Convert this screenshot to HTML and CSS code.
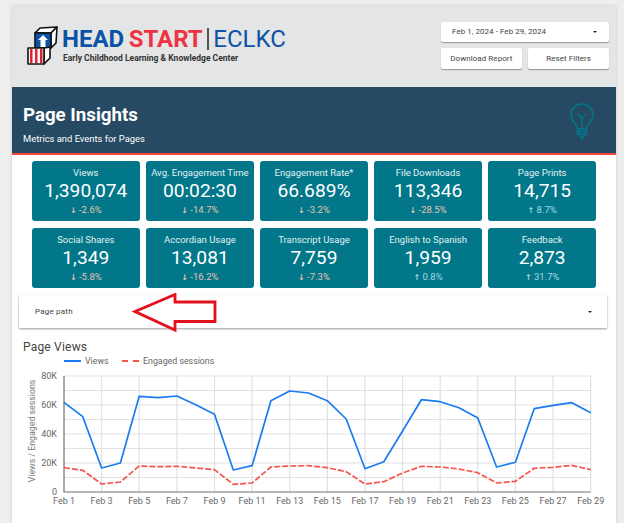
FILE: index.html
```html
<!DOCTYPE html>
<html lang="en">
<head>
  <meta charset="UTF-8">
  <title>Page Insights</title>
  <link rel="stylesheet" href="styles.css">
</head>
<body>
<div class="report">
  <!--header-->
  <div class="top">
    <div class="brand">
      <svg class="blocks" width="32" height="40" viewBox="0 0 32 40">
        <g stroke="#111" stroke-width="1.6" stroke-linejoin="round">
          <path d="M9 7 L14 2 L31 1 L25 7Z" fill="#fff"/>
          <path d="M25 7 L31 1 L30 17 L25 22Z" fill="#fff"/>
          <rect x="9" y="7" width="16" height="15" fill="#0a55a5"/>
          <path d="M18 22 L24 21 L24 32 L18 38Z" fill="#fff"/>
          <rect x="2" y="22" width="16" height="16" fill="#fff"/>
        </g>
        <path d="M17 9 L22 14 H19.5 V21 H14.5 V14 H12Z" fill="#fff"/>
        <path d="M4 23 H6.500 V37 H4Z M9 23 H11.500 V37 H9Z M14 23 H16.500 V37 H14Z" fill="#e4202e"/>
      </svg>
      <div class="brand-text">
        <div class="brand-name"><span class="blue">HEAD</span> <span class="red">START</span><i class="divider"></i><span class="eclkc">ECLKC</span></div>
        <div class="brand-sub">Early Childhood Learning &amp; Knowledge Center</div>
      </div>
    </div>
    <div class="controls">
      <div class="btn date">Feb 1, 2024 - Feb 29, 2024<i class="caret"></i></div>
      <div class="btn-row">
        <div class="btn">Download Report</div>
        <div class="btn">Reset Filters</div>
      </div>
    </div>
  </div>

  <!--banner-->
  <div class="banner">
    <div>
      <h1>Page Insights</h1>
      <p>Metrics and Events for Pages</p>
    </div>
    <svg class="bulb" width="24" height="37" viewBox="0 0 24 37" fill="none" stroke="#00788a" stroke-width="1.5">
      <path d="M7.500 26 C7 21 1 18 1 12 A11 11 0 0 1 23 12 C23 18 17 21 16.500 26Z"/>
      <path d="M12 26 V15 M8 11 L12 15 L16 11"/>
      <path d="M7.500 26 V31 H16.500 V26 M7.500 28.500 H16.500 M9 31 L12 36 L15 31"/>
    </svg>
  </div>

  <!--scorecards-->
  <div class="cards">
    <div class="card"><div class="card-title">Views</div><div class="card-value">1,390,074</div><div class="delta down"><b>↓</b> -2.6%</div></div>
    <div class="card"><div class="card-title">Avg. Engagement Time</div><div class="card-value">00:02:30</div><div class="delta down"><b>↓</b> -14.7%</div></div>
    <div class="card"><div class="card-title">Engagement Rate*</div><div class="card-value">66.689%</div><div class="delta down"><b>↓</b> -3.2%</div></div>
    <div class="card"><div class="card-title">File Downloads</div><div class="card-value">113,346</div><div class="delta down"><b>↓</b> -28.5%</div></div>
    <div class="card"><div class="card-title">Page Prints</div><div class="card-value">14,715</div><div class="delta up"><b>↑</b> 8.7%</div></div>
    <div class="card"><div class="card-title">Social Shares</div><div class="card-value">1,349</div><div class="delta down"><b>↓</b> -5.8%</div></div>
    <div class="card"><div class="card-title">Accordian Usage</div><div class="card-value">13,081</div><div class="delta down"><b>↓</b> -16.2%</div></div>
    <div class="card"><div class="card-title">Transcript Usage</div><div class="card-value">7,759</div><div class="delta down"><b>↓</b> -7.3%</div></div>
    <div class="card"><div class="card-title">English to Spanish</div><div class="card-value">1,959</div><div class="delta up"><b>↑</b> 0.8%</div></div>
    <div class="card"><div class="card-title">Feedback</div><div class="card-value">2,873</div><div class="delta up"><b>↑</b> 31.7%</div></div>
  </div>

  <!--filter, the red arrow lies over it-->
  <div class="filter">
    <span>Page path</span><i class="caret"></i>
    <svg class="callout" width="86" height="40" viewBox="0 0 86 40">
      <path d="M3 18.500 L43 1.500 V9 H83 V28.500 H43 V37 Z" fill="#fff" stroke="#e3101e" stroke-width="2.800"/>
    </svg>
  </div>

  <!--chart-->
  <h2>Page Views</h2>
  <div class="legend">
    <span class="key"><i class="swatch views"></i>Views</span>
    <span class="key"><i class="swatch sessions"></i>Engaged sessions</span>
  </div>
  <svg class="chart" width="604" height="142" viewBox="12 368 604 142">
    <g stroke="#e2e2e2" stroke-width="1.2">
      <path d="M64 376 H590.700 M64 390.500 H590.700 M64 405 H590.700 M64 419.500 H590.700 M64 434 H590.700 M64 448.500 H590.700 M64 463 H590.700 M64 477.500 H590.700"/>
      <path d="M101.600 376 V492 M139.200 376 V492 M176.900 376 V492 M214.500 376 V492 M252.100 376 V492 M289.700 376 V492 M327.300 376 V492 M365 376 V492 M402.600 376 V492 M440.200 376 V492 M477.800 376 V492 M515.400 376 V492 M553.100 376 V492 M590.700 376 V492"/>
    </g>
    <path d="M64 376 V492 H590.700" fill="none" stroke="#707070" stroke-width="1.200"/>
    <polyline class="line-views" points="64,402.300 82.800,416.700 101.600,468 120.400,463 139.200,396.300 158.100,397.700 176.900,396 195.700,404.700 214.500,414.300 233.300,470 252.100,465.700 270.900,400.700 289.700,391 308.500,393 327.300,400.700 346.200,419 365,468.700 383.800,461.700 402.600,431 421.400,399.700 440.200,401.700 459,407.700 477.800,418 496.600,467 515.400,462.300 534.200,408.700 553.100,405.300 571.900,402.700 590.700,412.700"/>
    <polyline class="line-sessions" points="64,467.700 82.800,470.300 101.600,484 120.400,482 139.200,466 158.100,466.700 176.900,466.300 195.700,468 214.500,469.700 233.300,484.300 252.100,483 270.900,467 289.700,466 308.500,465.700 327.300,467.700 346.200,471.700 365,484 383.800,481.700 402.600,473 421.400,466.300 440.200,467 459,469 477.800,472.700 496.600,483 515.400,481.300 534.200,468.300 553.100,467.300 571.900,465.300 590.700,469.700"/>
    <g class="axis-y">
      <text x="57" y="379">80K</text>
      <text x="57" y="408">60K</text>
      <text x="57" y="437">40K</text>
      <text x="57" y="466">20K</text>
      <text x="57" y="495">0</text>
    </g>
    <text class="axis-name" transform="translate(35 431) rotate(-90)">Views / Engaged sessions</text>
    <g class="axis-x">
      <text x="64" y="504">Feb 1</text>
      <text x="101.600" y="504">Feb 3</text>
      <text x="139.200" y="504">Feb 5</text>
      <text x="176.900" y="504">Feb 7</text>
      <text x="214.500" y="504">Feb 9</text>
      <text x="252.100" y="504">Feb 11</text>
      <text x="289.700" y="504">Feb 13</text>
      <text x="327.300" y="504">Feb 15</text>
      <text x="365" y="504">Feb 17</text>
      <text x="402.600" y="504">Feb 19</text>
      <text x="440.200" y="504">Feb 21</text>
      <text x="477.800" y="504">Feb 23</text>
      <text x="515.400" y="504">Feb 25</text>
      <text x="553.100" y="504">Feb 27</text>
      <text x="590.700" y="504">Feb 29</text>
    </g>
  </svg>
</div>
</body>
</html>
```

FILE: styles.css
```css
* {
  margin: 0;
  padding: 0;
  box-sizing: border-box;
}

html,
body {
  height: 100%;
  overflow: hidden;
}

body {
  background-color: #eeeeee;
  font-family: Roboto, "Liberation Sans", sans-serif;
}

.report {
  width: 604px;
  height: 517px;
  margin: 6px 0 0 12px;
  background-color: #fff;
  box-shadow: 0 0 3px rgba(0, 0, 0, .15);
}

/*header*/
.top {
  height: 81px;
  padding: 15px 7px 0 14px;
  background-color: #e4e5e7;
  display: flex;
  justify-content: space-between;
  align-items: flex-start;
}

.brand {
  display: flex;
  align-items: flex-start;
  gap: 4px;
  padding-top: 5px;
}

.brand-name {
  font-size: 24px;
  line-height: 24px;
  font-weight: 700;
  white-space: nowrap;
  display: flex;
  gap: 4.500px;
  align-items: center;
  margin-top: 1px;
}

.blue {
  color: #0b53a5;
}

.red {
  color: #ee3342;
}

.divider {
  width: 1.500px;
  height: 22px;
  background-color: #555;
}

.eclkc {
  color: #0b53a5;
  font-weight: 400;
}

.brand-sub {
  margin-top: 2px;
  padding-left: 1px;
  font-size: 8.500px;
  line-height: 11px;
  font-weight: 700;
  color: #333;
  white-space: nowrap;
}

.controls {
  width: 168px;
  display: flex;
  flex-direction: column;
  gap: 6px;
  margin-top: .5px;
}

.btn-row {
  display: flex;
  gap: 6.500px;
}

.btn {
  flex: 1;
  height: 20.500px;
  background-color: #fff;
  border-radius: 2px;
  box-shadow: 0 1px 1px rgba(0, 0, 0, .35);
  font-size: 8px;
  letter-spacing: .05px;
  color: #444;
  display: flex;
  align-items: center;
  justify-content: center;
  white-space: nowrap;
}

.btn.date {
  flex: none;
  padding: 0 12px 0 11px;
  justify-content: space-between;
}

.caret {
  width: 0;
  height: 0;
  border: 2px solid transparent;
  border-top: 2px solid #222;
  border-bottom: 0;
}

/*banner*/
.banner {
  height: 68px;
  padding: 16px 18px 0 11px;
  background-color: #264a63;
  border-bottom: 2px solid #f04438;
  display: flex;
  justify-content: space-between;
  color: #fff;
}

.banner h1 {
  font-size: 18.700px;
  line-height: 24px;
  font-weight: 700;
}

.banner p {
  margin-top: 6px;
  font-size: 9.400px;
  line-height: 12px;
}

.bulb {
  margin: 0 4px 0 0;
}

/*scorecards*/
.cards {
  padding: 6px 20px 0 20px;
  display: grid;
  grid-template-columns: repeat(5, 107.600px);
  grid-auto-rows: 60px;
  gap: 7px 6.500px;
}

.card {
  background-color: #017789;
  border-radius: 3px;
  color: #fff;
  text-align: center;
  padding-top: 6px;
}

.card-title {
  font-size: 9.500px;
  line-height: 12px;
  color: #e3f1f3;
  white-space: nowrap;
}

.card-value {
  font-size: 19.200px;
  line-height: 24px;
}

.delta {
  margin-top: 1px;
  font-size: 9.500px;
  line-height: 12px;
}

.delta b {
  font-family: "DejaVu Sans", sans-serif;
  font-size: 8px;
}

.delta.down {
  color: #e6c4b4;
}

.delta.up {
  color: #a5d8e6;
}

/*filter*/
.filter {
  position: relative;
  height: 33px;
  margin: 7px 9px 0 7px;
  padding: 0 15px 0 16px;
  background-color: #fff;
  box-shadow: 0 1px 2px rgba(0, 0, 0, .4);
  font-size: 8px;
  letter-spacing: .2px;
  color: #444;
  display: flex;
  align-items: center;
  justify-content: space-between;
}

.callout {
  position: absolute;
  left: 113px;
  top: -2px;
}

/*chart*/
h2 {
  margin: 11px 0 0 11px;
  font-size: 12px;
  line-height: 16px;
  font-weight: 400;
  letter-spacing: .2px;
  color: #444;
}

.legend {
  height: 12px;
  margin-left: 52px;
  display: flex;
  gap: 13.500px;
  font-size: 8.800px;
  line-height: 12px;
  color: #666;
}

.key {
  display: flex;
  align-items: center;
  gap: 4px;
}

.swatch {
  width: 17px;
  height: 0;
  border-top: 2px solid #1a7cf0;
}

.swatch.sessions {
  border-top: 2px dashed #f4564d;
}

.chart {
  display: block;
  margin-top: 1px;
}

.chart text {
  font-family: Roboto, "Liberation Sans", sans-serif;
  font-size: 9px;
  fill: #666;
}

.chart .axis-name {
  font-size: 8.800px;
  fill: #777;
}

.line-views,
.line-sessions {
  fill: none;
  stroke-width: 1.700px;
  stroke-linejoin: round;
}

.line-views {
  stroke: #1a7cf0;
}

.line-sessions {
  stroke: #f4564d;
  stroke-dasharray: 6 2;
}

.axis-y text {
  text-anchor: end;
}

.axis-x text,
.chart .axis-name {
  text-anchor: middle;
}
```
